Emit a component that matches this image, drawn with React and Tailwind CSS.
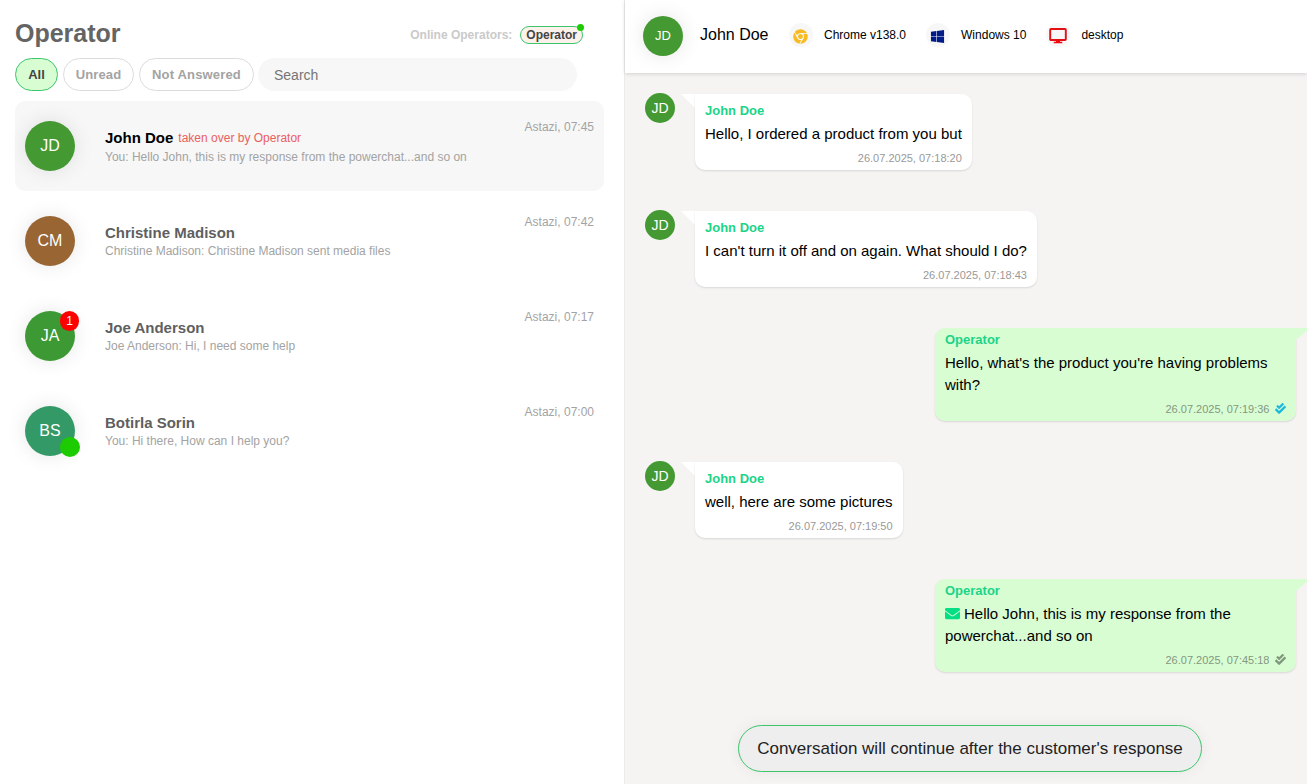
import React from 'react';
import { FaCheckDouble, FaChrome, FaWindows, FaEnvelope } from 'react-icons/fa';

const conversations = [
  { initials: 'JD', color: 'bg-[#449933]', name: 'John Doe', note: 'taken over by Operator', text: 'You: Hello John, this is my response from the powerchat...and so on', time: '07:45', active: true },
  { initials: 'CM', color: 'bg-[#996633]', name: 'Christine Madison', text: 'Christine Madison: Christine Madison sent media files', time: '07:42' },
  { initials: 'JA', color: 'bg-[#3c9933]', name: 'Joe Anderson', text: 'Joe Anderson: Hi, I need some help', time: '07:17', unread: 1 },
  { initials: 'BS', color: 'bg-[#339966]', name: 'Botirla Sorin', text: 'You: Hi there, How can I help you?', time: '07:00', online: true },
];

const messages = [
  { text: 'Hello, I ordered a product from you but', time: '07:18:20' },
  { text: "I can't turn it off and on again. What should I do?", time: '07:18:43' },
  { own: true, text: "Hello, what's the product you're having problems with?", time: '07:19:36', check: 'text-[#1cb8dc]' },
  { text: 'well, here are some pictures', time: '07:19:50' },
  { own: true, mail: true, text: 'Hello John, this is my response from the powerchat...and so on', time: '07:45:18', check: 'text-[#7f967b]' },
];

function Conversation({ c }) {
  return (
    <div className={`flex h-[90px] rounded-[10px] pl-[10px] pr-[10px] ${c.active ? 'bg-[#f7f7f7]' : ''}`}>
      <div className={`relative mt-5 flex size-[50px] shrink-0 items-center justify-center rounded-full text-base text-white shadow-[0_0_20px_rgba(0,0,0,0.1)] ${c.color}`}>
        {c.initials}
        {c.unread && (
          <span className="absolute -right-[4px] top-0 flex h-5 w-[19px] items-center justify-center rounded-full bg-[#ff0000] text-xs">{c.unread}</span>
        )}
        {c.online && <span className="absolute -bottom-px -right-[5px] size-5 rounded-full bg-[#1ccc00]" />}
      </div>
      <div className="ml-[30px] mt-[28px] flex-1">
        <div className="flex h-[18px] items-center">
          <span className={`text-[15px] font-bold ${c.active ? 'text-black' : 'text-[#5f5f5f]'}`}>{c.name}</span>
          {c.note && <span className="ml-[5px] text-xs text-[#ea6060]">{c.note}</span>}
        </div>
        <div className={`text-xs leading-[18px] text-[#a3a3a3] ${c.active ? 'mt-px' : ''}`}>{c.text}</div>
      </div>
      <div className="mt-[17px] text-xs leading-[18px] text-[#a3a3a3]">Astazi, {c.time}</div>
    </div>
  );
}

function Message({ m }) {
  if (m.own) {
    return (
      <div className="flex justify-end">
        <div className="h-[93px] w-[361px] rounded-bl-[10px] rounded-br-[10px] rounded-tl-[10px] bg-[#d9fdd3] pl-[10.5px] pr-[10px] shadow-[0_1px_2px_rgba(0,0,0,0.12)]">
          <div className="pt-[3px] text-[13px] font-bold leading-[18px] text-[#1cd488]">Operator</div>
          <div className="mt-[3px] text-[15px] leading-[22px] text-black">
            {m.mail && <FaEnvelope className="mr-1 inline-block size-[15px] align-[-2px] text-[#05de85]" />}
            {m.text}
          </div>
          <div className="mt-[6px] flex items-center justify-end text-[11px] leading-[14px] text-[#84977f]">
            26.07.2025, {m.time}
            <FaCheckDouble className={`-mt-px ml-[5px] size-[11px] stroke-current stroke-[8px] ${m.check}`} />
          </div>
        </div>
        <svg className="h-[12px] w-[11.5px] shrink-0" viewBox="0 0 11.5 12"><path d="M0 0H11.5V2L0 12Z" fill="#d9fdd3" /></svg>
      </div>
    );
  }
  return (
    <div className="flex pl-5">
      <div className="-mt-px flex size-[30px] items-center justify-center rounded-full bg-[#449933] text-sm text-white">JD</div>
      <svg className="-mr-px ml-[5px] h-[15px] w-[16px] shrink-0" viewBox="0 0 16 15"><path d="M1 0H16V14.5H15.5Z" fill="#fff" /></svg>
      <div className="h-[76px] rounded-bl-[10px] rounded-br-[10px] rounded-tr-[10px] bg-white px-[10px] shadow-[0_1px_2px_rgba(0,0,0,0.12)]">
        <div className="pt-[8px] text-[13px] font-bold leading-[18px] text-[#1cd488]">John Doe</div>
        <div className="mt-[3px] text-[15px] leading-[22px] text-black">{m.text}</div>
        <div className="mt-[6px] text-right text-[11px] leading-[14px] text-[#999]">26.07.2025, {m.time}</div>
      </div>
    </div>
  );
}

function MonitorIcon() {
  return (
    <svg className="mt-[1px] h-[16px] w-[18px]" viewBox="0 0 18 16" fill="none">
      <rect x="1.2" y="1" width="15.6" height="11" rx="0.8" stroke="#e20f14" strokeWidth="1.9" />
      <path d="M7 12.5H11V13.8H13.3V15.3H4.7V13.8H7Z" fill="#f20a0e" />
    </svg>
  );
}

function Info({ icon, label }) {
  return (
    <div className="flex items-center">
      <span className="flex size-6 items-center justify-center rounded-full bg-[#f7f7f7]">{icon}</span>
      <span className="ml-[11px] text-xs text-black">{label}</span>
    </div>
  );
}

export default function App() {
  return (
    <div className="flex h-[784px] w-[1307px] overflow-hidden bg-white font-['Liberation_Sans',Arial,sans-serif]">
      <aside className="w-[625px] shrink-0 border-r border-[#ebebeb] pl-[15px] pr-5">
        <header className="flex h-[58px] items-start justify-between pr-[21px]">
          <h1 className="mt-[18px] text-[25px] font-bold leading-[30px] text-[#646464]">Operator</h1>
          <div className="mt-[26px] flex items-center text-xs font-bold leading-[18px] text-[#cacaca]">
            Online Operators:
            <span className="relative ml-2 flex h-[18px] items-center rounded-full border border-[#3cc56b] bg-[#fcf1eb] px-[5px] text-[#444]">
              Operator
              <span className="absolute -right-[2px] -top-[3px] size-[7px] rounded-full bg-[#1ccc00]" />
            </span>
          </div>
        </header>
        <div className="flex h-[33px] gap-[5px] text-[13px] font-bold text-[#a3a3a3]">
          <button className="w-[43px] rounded-full border border-[#3cc56b] bg-[#d9fdd3] text-[#444]">All</button>
          <button className="w-[71px] rounded-full border border-[#dcdcdc] tracking-[0.1px]">Unread</button>
          <button className="w-[115px] rounded-full border border-[#dcdcdc] tracking-[0.17px]">Not Answered</button>
          <input className="-ml-px w-[319px] rounded-full bg-[#f7f7f7] px-[16px] text-sm font-normal placeholder:text-[#757575]" placeholder="Search" />
        </div>
        <div className="mt-[10px] flex flex-col gap-[5px]">
          {conversations.map((c) => <Conversation key={c.name} c={c} />)}
        </div>
      </aside>
      <main className="flex w-[682px] flex-col bg-[#f5f4f2]">
        <header className="z-10 flex h-[73px] shrink-0 items-center bg-white pl-[18px] shadow-[0_1px_4px_rgba(0,0,0,0.14)]">
          <div className="mb-px flex size-10 items-center justify-center rounded-full bg-[#449933] text-[13px] text-white shadow-[0_0_20px_rgba(0,0,0,0.1)]">JD</div>
          <div className="mb-1 ml-[17px] w-[89px] text-base text-black">John Doe</div>
          <div className="mb-[3px] flex gap-5">
            <Info icon={<FaChrome className="mr-px mt-0.5 size-[15px] text-[#f8bb24]" />} label="Chrome v138.0" />
            <Info icon={<FaWindows className="mr-px mt-0.5 size-[15px] text-[#001a88]" />} label="Windows 10" />
            <Info icon={<MonitorIcon />} label="desktop" />
          </div>
        </header>
        <div className="mt-[21px] flex flex-col gap-[41px]">
          {messages.map((m) => <Message key={m.time} m={m} />)}
        </div>
        <div className="mt-[53px] flex justify-center pl-[8px]">
          <div className="flex h-[47px] w-[464px] items-center justify-center rounded-full border border-[#3cc56b] bg-[#eee] text-[17px] text-[#222] shadow-[0_0_15px_rgba(0,0,0,0.06)]">Conversation will continue after the customer's response</div>
        </div>
      </main>
    </div>
  );
}
